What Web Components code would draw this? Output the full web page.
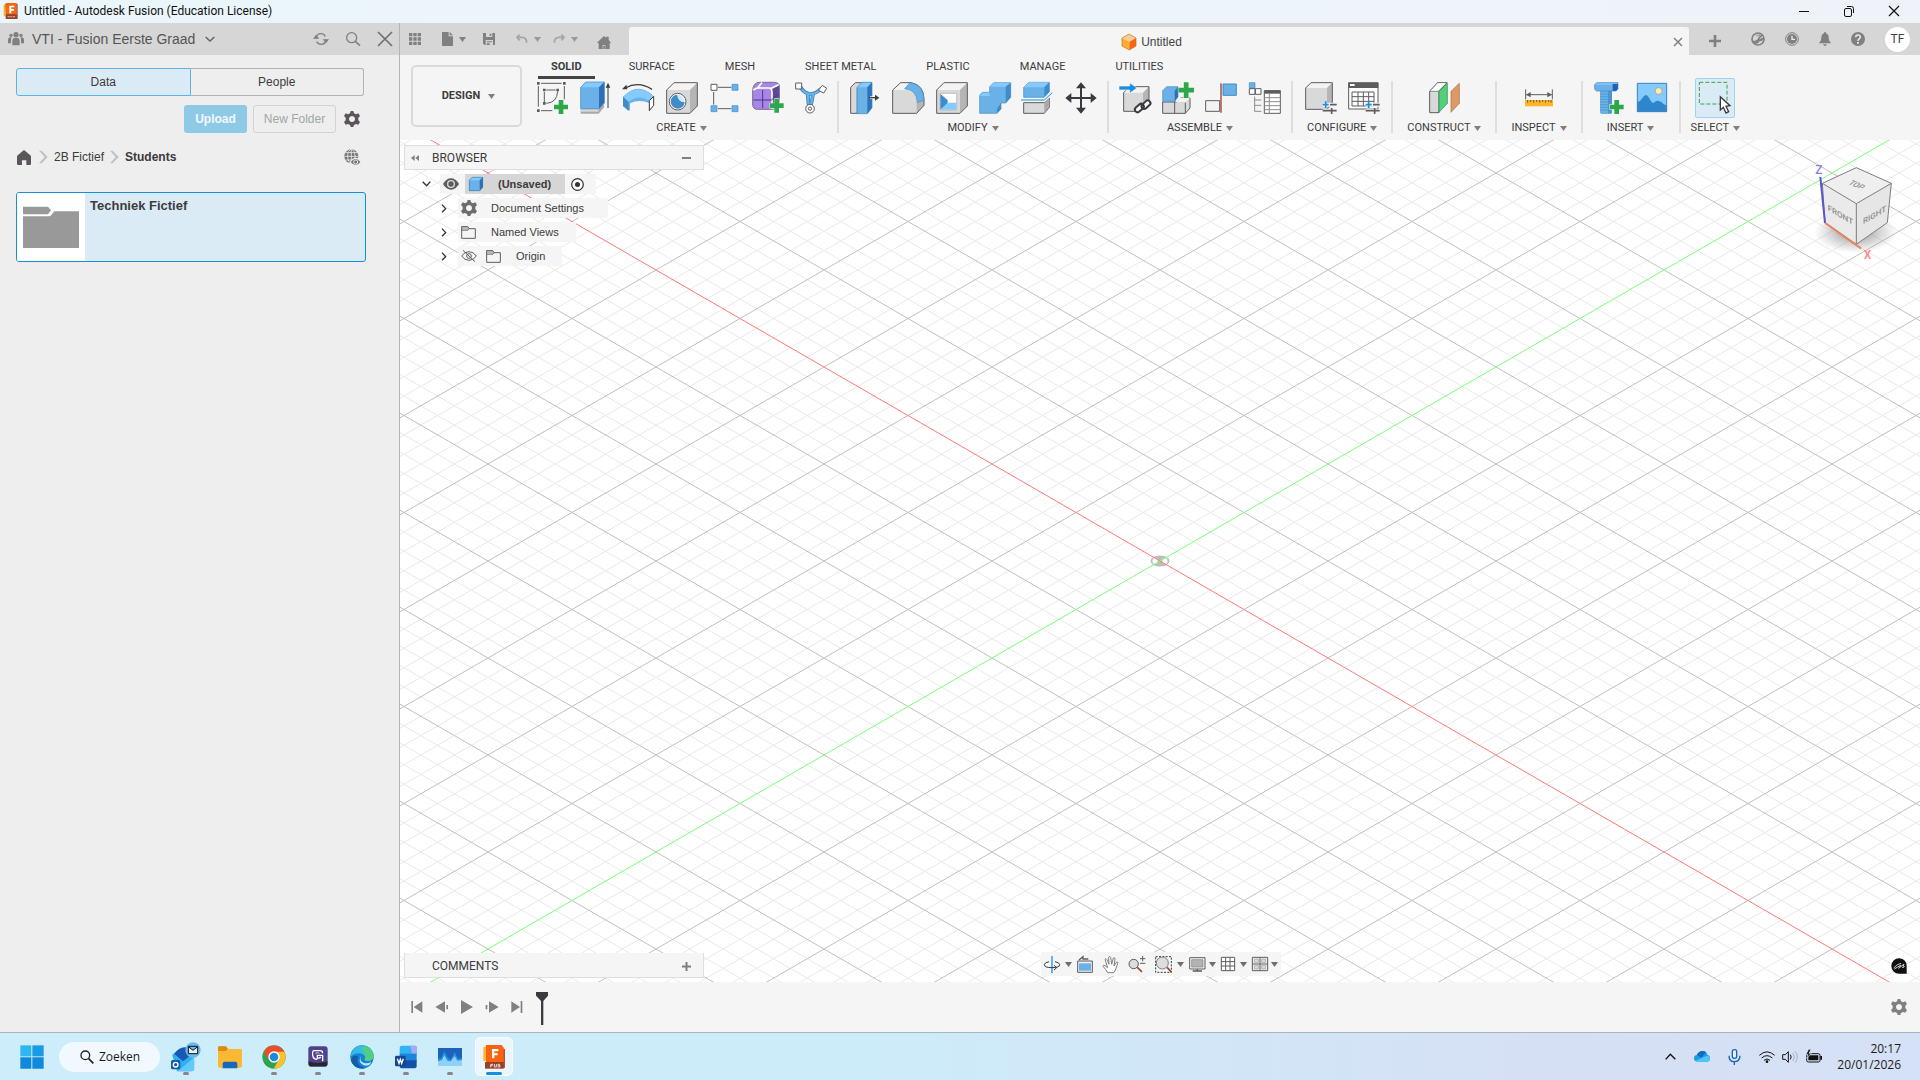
<!DOCTYPE html>
<html lang="nl">
<head>
<meta charset="utf-8">
<title>Untitled - Autodesk Fusion (Education License)</title>
<style>
html, body { height: 100%; margin: 0; }
body { font-family: "Liberation Sans", Arial, sans-serif; font-size: 12px; color: #3c3c3c; overflow: hidden; }
</style>
</head>
<body>
<fusion-desktop></fusion-desktop>
<script>
/* ---------- icon library: [width, height, viewBox, markup] ---------- */
const G = '#808080', D = '#5f5b5f', B = '#6ab1e7', BL = '#84caff', BD = '#3f8cc9', K = '#3a3a3f', GR = '#2ba84a';
const gearPath = 'M20 0h8l2 7 6 3 7-3 5 8-5 5v8l5 5-5 8-7-2-6 3-2 6h-8l-2-6-6-3-7 2-5-8 5-5v-8l-5-5 5-8 7 3 6-3zM24 15a9 9 0 1 0 .01 0z';
const plus = (x, y, s = 42) => `<path d="M${x + s / 2 - 7} ${y}h14v${s / 2 - 7}h${s / 2 - 7}v14h-${s / 2 - 7}v${s / 2 - 7}h-14v-${s / 2 - 7}h-${s / 2 - 7}v-14h${s / 2 - 7}z" fill="${GR}" stroke="#f5f5f5" stroke-width="3" paint-order="stroke"/>`;
const grayBox = (x, y, w, h, d) => `<path d="M${x} ${y + d}l${d}-${d}h${w - d}v${h - d}l-${d} ${d}h-${w - d}z" fill="#d9d9d9"/><path d="M${x} ${y + d}l${d}-${d}h${w - d}l-${d} ${d}z" fill="#f3f3f3"/><path d="M${x + w - d} ${y + d}l${d}-${d}v${h - d}l-${d} ${d}z" fill="#b5b5b5"/><path d="M${x} ${y + d}l${d}-${d}h${w - d}v${h - d}l-${d} ${d}h-${w - d}z" fill="none" stroke="${D}" stroke-width="3"/>`;
const sliders = (x, y) => `<g stroke="#f5f5f5" stroke-width="12"><path d="M${x} ${y + 10}h40M${x} ${y + 28}h40"/></g><path d="M${x} ${y + 10}h18M${x + 9} ${y}v20" stroke="#1a8fdc" stroke-width="5"/><path d="M${x + 22} ${y + 10}h20M${x} ${y + 28}h42M${x + 27} ${y + 20}v18" stroke="${D}" stroke-width="5"/>`;

const ICONS = {
  fusion: [16, 16, '0 0 48 48', '<path d="M6 3h34v43H10z" fill="#94452b"/><path d="M2 6l6-4v38H2z" fill="#f4b22f"/><path d="M8 0h32v34H8z" fill="#f9650f"/><path d="M8 34h32l4 3v11H8z" fill="#94452b"/><path d="M40 0l4 4v34l-4-4z" fill="#b34f25"/><path d="M19 8h15v5h-9v5h8v5h-8v8h-6z" fill="#fff"/><path d="M14 41h22" stroke="#d9a48f" stroke-width="4" stroke-dasharray="6 2"/>'],
  fusionBig: [22, 24, '0 0 66 72', '<path d="M60 10l6 3v55l-6 2z" fill="#b8542d"/><path d="M1 6l8-2v44H1z" fill="#fdb92c"/><path d="M9 0h47l6 8v43H9z" fill="#fa6410"/><path d="M6 51h56v20H6z" fill="#94432a"/><path d="M27 12h19v7H34v6h10v6H34v9h-7z" fill="#fff"/><g fill="none" stroke="#f1d5c8" stroke-width="3"><path d="M23 67v-9h7M23 62h6M34 57v9h6v-9M51 58h-6v4h6v4h-7"/></g>'],
  winMin: [12, 12, '0 0 12 12', '<path d="M1 6.500h10" stroke="#111"/>'],
  winMax: [12, 12, '0 0 12 12', '<g fill="none" stroke="#111"><rect x="1.5" y="3.5" width="7" height="8" rx="1.5"/><path d="M4 1.5h4.500a2 2 0 0 1 2 2V8"/></g>'],
  winClose: [12, 12, '0 0 12 12', '<path d="M1 1l10 10M11 1L1 11" stroke="#111" stroke-width="1.200"/>'],
  people: [16, 14, '0 0 48 42', `<g fill="${G}"><circle cx="24" cy="8" r="8"/><circle cx="9" cy="10" r="5"/><circle cx="39" cy="10" r="5"/><path d="M13 40V26q0-9 11-9t11 9v14z"/><path d="M0 34V23q0-6 6-7h5q-2 4-2 8v10zM48 34V23q0-6-6-7h-5q2 4 2 8v10z"/></g>`],
  chevDown: [10, 6, '0 0 30 18', '<path d="M2 3l13 12L28 3" fill="none" stroke="#606060" stroke-width="4"/>'],
  refresh: [16, 14, '0 0 48 42', `<g fill="none" stroke="${G}" stroke-width="4"><path d="M9 20Q10 5 24 5q9 0 13 8M39 22Q38 37 24 37q-9 0-13-8"/></g><path d="M29 22h19l-9 12zM0 20h19L9 8z" fill="${G}"/>`],
  search: [16, 16, '0 0 48 48', `<g fill="none" stroke="${G}" stroke-width="4"><circle cx="20" cy="20" r="15"/><path d="M31 31l14 13" stroke-width="5"/></g>`],
  close: [16, 16, '0 0 48 48', '<path d="M3 3l42 42M45 3L3 45" stroke="#6f6f6f" stroke-width="5"/>'],
  closeSm: [10, 10, '0 0 10 10', `<path d="M1 1l8 8M9 1L1 9" stroke="${G}" stroke-width="1.500"/>`],
  gear: [16, 16, '0 0 48 48', `<path d="${gearPath}" fill="currentColor" fill-rule="evenodd"/>`],
  homeDark: [14, 15, '0 0 42 45', '<path d="M21 0l19 16q2 2 2 4v22q0 3-3 3H28V31H15v14H3q-3 0-3-3V20q0-2 2-4z" fill="#5b565c"/>'],
  crumb: [9, 14, '0 0 27 42', '<path d="M0 2h8l18 19L8 40H0l17-19z" fill="#c1c1c1"/>'],
  globe: [17, 17, '0 0 51 51', `<circle cx="22" cy="22" r="21" fill="#737373"/><g fill="none" stroke="#eee" stroke-width="2.500"><path d="M22 1v42M1 22h42M5 11h34M5 33h34"/><ellipse cx="22" cy="22" rx="11" ry="21"/></g><path d="M17 39q8-13 18-13t16 13q-6 13-16 13t-18-13z" fill="#eee"/><path d="M20 39q7-9 15-9t14 9q-6 9-14 9t-15-9z" fill="#737373"/><circle cx="35" cy="39" r="6" fill="none" stroke="#eee" stroke-width="3"/>`],
  folderBig: [56, 42, '0 0 168 126', '<path d="M2 2h73l9 11-9 12H0V2zM0 31h77q5 0 8-4l9-11h74v110H0z" fill="#999"/>'],
  apps: [12, 12, '0 0 36 36', `<path d="M0 0h10v10H0zM13 0h10v10H13zM26 0h10v10H26zM0 13h10v10H0zM13 13h10v10H13zM26 13h10v10H26zM0 26h10v10H0zM13 26h10v10H13zM26 26h10v10H26z" fill="${G}"/>`],
  doc: [11, 14, '0 0 33 42', `<path d="M0 0h20v13h13v29H0zM23 0l10 10H23z" fill="${G}"/>`],
  save: [12, 12, '0 0 36 36', `<path d="M0 0h36v36H5L0 31z" fill="${G}"/><path d="M9 0h19v12H9zM8 21h22v15H8z" fill="#d6d6d6"/><path d="M20 2h5v7h-5zM11 25h16v3H11zM11 31h9v5h-9z" fill="${G}"/>`],
  undo: [12, 10, '0 0 36 30', '<path d="M11 2L3 10l8 9M4 10h14q14 0 14 16" fill="none" stroke="#a5a5a5" stroke-width="5"/>'],
  redo: [12, 10, '0 0 36 30', '<path d="M25 2l8 8-8 9M32 10H18Q4 10 4 26" fill="none" stroke="#a5a5a5" stroke-width="5"/>'],
  home: [14, 13, '0 0 42 39', `<path d="M21 0l6 5V2h8v10l7 8-4 2v17H25V27h-8v12H5V22l-5-2z" fill="${G}"/><path d="M19 29h5v10h-5z" fill="${G}"/>`],
  caret: [7, 5, '0 0 7 5', '<path d="M0 0h7L3.500 5z" fill="currentColor"/>'],
  untitled: [14, 16, '0 0 42 48', '<path d="M0 12L21 0l21 12-20 11z" fill="#f6cd93"/><path d="M0 12l22 11v25L0 36z" fill="#fbae2f"/><path d="M42 12L22 23v25l20-12z" fill="#f9660d"/><path d="M0 12L21 0l21 12v24L22 48 0 36z" fill="none" stroke="#c96a1f" stroke-width="2"/>'],
  plusGray: [12, 12, '0 0 36 36', `<path d="M14 0h8v14h14v8H22v14h-8V22H0v-8h14z" fill="${G}"/>`],
  plusSm: [9, 9, '0 0 9 9', `<path d="M3.500 0h2v3.500H9v2H5.500V9h-2V5.500H0v-2h3.500z" fill="${G}"/>`],
  minusSm: [9, 2, '0 0 9 2', `<path d="M0 0h9v2H0z" fill="${G}"/>`],
  ext: [14, 14, '0 0 42 42', `<circle cx="21" cy="21" r="18" fill="none" stroke="${G}" stroke-width="5"/><path d="M6 26q14 2 16-10l-7-6 9-4 5 5 3-4 4 6-7 6 9-2q-2 12-12 10Q24 36 9 36z" fill="${G}"/><path d="M22 6l-2 10 6-4M36 14l-10 6" stroke="#d6d6d6" stroke-width="3" fill="none"/>`],
  clock: [14, 14, '0 0 42 42', `<circle cx="21" cy="21" r="19" fill="none" stroke="${G}" stroke-width="3"/><circle cx="21" cy="21" r="15" fill="${G}"/><path d="M21 11v11h9" fill="none" stroke="#eee" stroke-width="4"/>`],
  bell: [12, 14, '0 0 36 42', `<path d="M18 0q3 0 3 4 8 3 8 13 0 9 7 15v2H0v-2q7-6 7-15Q7 7 15 4q0-4 3-4zM12 37h12q-2 5-6 5t-6-5z" fill="${G}"/>`],
  help: [14, 14, '0 0 42 42', `<circle cx="21" cy="21" r="21" fill="${G}"/><path d="M14 16q0-7 7-7t7 6q0 4-4 6-3 2-3 6" fill="none" stroke="#e4e4e4" stroke-width="5"/><path d="M18 30h6v5h-6z" fill="#e4e4e4"/>`],

  sketch: [32, 32, '0 0 96 96', `<g fill="none" stroke="${D}" stroke-width="3"><path d="M12 4h62M4 12v62M82 12v40M12 86h34M22 30v30M28 24h28M62 28q-2 34-34 36"/></g><path d="M0 0h8v8H0zM78 0h8v8h-8zM0 82h8v8H0zM18 20h8v8h-8zM58 20h8v8h-8zM18 60h8v8h-8z" fill="${D}"/>${plus(51, 54)}`],
  extrude: [32, 32, '0 0 96 96', `<path d="M2 82h54l16-16v10L56 95H2z" fill="#a9a9a9" /><path d="M2 86h54" stroke="#d9d9d9" stroke-width="6"/><path d="M2 16L17 0h56v63L57 80H2z" fill="${B}"/><path d="M2 16L17 0h56L57 16z" fill="${BL}"/><path d="M57 16L73 0v63L57 80z" fill="#2f6fb5"/><path d="M2 16L17 0h56v63L57 80H2z" fill="none" stroke="#3c83c0" stroke-width="2"/><path d="M84 78V10" stroke="${K}" stroke-width="3"/><path d="M84 2l7 15H77z" fill="${K}"/>`],
  revolve: [33, 32, '0 0 99 96', `<path d="M3 44q45-46 90-3v30L83 86V64q-30-14-59 0v22L3 72z" fill="${B}"/><path d="M3 44q45-44 90-2L80 56q-28-20-60 3z" fill="${BL}"/><path d="M3 44l17 16v27L3 72z" fill="${BD}"/><path d="M82 56l13-13v27L82 86z" fill="#fff" stroke="${K}" stroke-width="3"/><path d="M10 18Q50-4 90 22" fill="none" stroke="${K}" stroke-width="4"/><path d="M0 22L13 8l3 14z" fill="${K}"/>`],
  hole: [32, 32, '0 0 96 96', `${grayBox(2, 2, 92, 92, 22)}<circle cx="35" cy="59" r="25" fill="#fff" stroke="${D}" stroke-width="3"/><path d="M34 38a21 21 0 1 0 22 22q-20 0-22-22z" fill="${BD}"/><path d="M34 38a21 21 0 0 1 22 22q-20 0-22-22z" fill="#cfe8fb"/>`],
  pattern: [30, 32, '0 0 90 96', `<path d="M24 16h40M11 30v38M24 80h40" stroke="${D}" stroke-width="3"/><path d="M3 7h18v18H3z" fill="#fff" stroke="${D}" stroke-width="3"/><path d="M66 7h18v18H66zM3 71h18v18H3zM66 71h18v18H66z" fill="${B}" stroke="${BD}" stroke-width="2"/>`],
  form: [32, 32, '0 0 96 96', `<path d="M2 26Q3 2 22 1h46q16 1 14 16v44Q80 82 62 82H16Q2 82 2 66z" fill="#a985e8"/><path d="M58 24L82 8v54L58 82z" fill="#5f4797"/><path d="M2 26Q3 2 22 1h46q16 1 14 16v44Q80 82 62 82H16Q2 82 2 66z" fill="none" stroke="#7a6d8c" stroke-width="3"/><path d="M4 24Q14 16 28 18h24q8 2 8 14v48M54 20L80 8M18 16l12-14" fill="none" stroke="#fff" stroke-width="5"/><path d="M32 24v54M4 54h54l22-18" fill="none" stroke="#4a3a86" stroke-width="3"/>${plus(53, 50)}`],
  pipe: [32, 32, '0 0 96 96', `<path d="M16 14Q26 34 46 36q20-2 32-16M38 36q2 28 4 38M54 36q-4 28-8 38" fill="none" stroke="#3477b5" stroke-width="11"/><path d="M16 14Q26 34 46 36q20-2 32-16M38 36q2 28 4 38M54 36q-4 28-8 38" fill="none" stroke="${B}" stroke-width="7"/><g fill="#fff" stroke="${D}" stroke-width="3"><path d="M2 3h18v18H2zM82 10l13 9-9 14-16-8z"/><circle cx="45" cy="80" r="13"/><circle cx="45" cy="80" r="5"/></g>`],
  presspull: [32, 32, '0 0 96 96', `<path d="M2 16L16 2h24L22 20v74H2z" fill="#d9d9d9" stroke="${D}" stroke-width="3"/><path d="M21 16L36 1h30v76L52 95H21z" fill="${B}"/><path d="M21 16L36 1h30L52 16z" fill="${BL}"/><path d="M52 16L66 1v76L52 95z" fill="#2f74b9"/><path d="M21 16L36 1h30v76L52 95H21z" fill="none" stroke="#3c83c0" stroke-width="2"/><path d="M60 47h16" stroke="#fff" stroke-width="8"/><path d="M58 47h20" stroke="${K}" stroke-width="4"/><path d="M75 38l13 9-13 9z" fill="${K}"/>`],
  fillet: [33, 32, '0 0 99 96', `<path d="M2 24L26 2h32q38 8 38 50v18L74 94H2z" fill="#d9d9d9"/><path d="M2 24L26 2h34L40 24z" fill="#f3f3f3"/><path d="M74 62l22-12v20L74 94z" fill="#b5b5b5"/><path d="M2 24L26 2h32q38 8 38 50v18L74 94H2z" fill="none" stroke="${D}" stroke-width="3"/><path d="M38 20L54 2q42 6 42 52L76 62q-2-40-38-42z" fill="${B}" stroke="${BD}" stroke-width="2"/>`],
  shell: [32, 32, '0 0 96 96', `${grayBox(2, 2, 92, 92, 22)}<path d="M12 34h50v50H12z" fill="#fff" stroke="#aaa" stroke-width="2"/><path d="M13 35l22 20v10L13 83z" fill="${BD}"/><path d="M35 62h26v21H13z" fill="${BL}"/>`],
  combine: [32, 32, '0 0 96 96', `<path d="M2 40l8-9h22V14L44 2h51v44L80 63H66v18L54 94H2z" fill="${B}" stroke="${BD}" stroke-width="2"/><path d="M32 14L44 2h51L80 14zM2 42l8-10h22v10z" fill="${BL}"/><path d="M80 14L95 2v44L80 63zM54 80l12-17v18L54 94z" fill="${BD}"/>`],
  offset: [33, 32, '0 0 99 96', `<path d="M8 62h62l15-14v28L70 94H8z" fill="#d9d9d9" stroke="${D}" stroke-width="3"/><path d="M70 62l15-14v28L70 92z" fill="#aaa"/><path d="M8 16L24 1h61v28L70 46H8z" fill="${B}" stroke="${BD}" stroke-width="2"/><path d="M8 16L24 1h61L70 16z" fill="${BL}"/><path d="M70 16L85 1v28L70 46z" fill="${BD}"/><path d="M2 54h68l24-22" fill="none" stroke="#f5f5f5" stroke-width="10"/><path d="M0 54h70l24-22" fill="none" stroke="#1a8fdc" stroke-width="3"/>`],
  move: [32, 32, '0 0 96 96', `<path d="M48 14v68M14 48h68" stroke="${K}" stroke-width="6"/><path d="M48 1l15 18H33zM48 95l15-18H33zM1 48l18-15v30zM95 48L77 33v30z" fill="${K}"/>`],
  insertLink: [33, 32, '0 0 99 96', `${grayBox(14, 14, 76, 74, 18)}<path d="M0 12h32V2l22 16-22 16V24H0z" fill="#1a8fdc" stroke="#f5f5f5" stroke-width="2"/><path d="M60 84l28-18" fill="none" stroke="#f5f5f5" stroke-width="26" stroke-linecap="round"/><g fill="none" stroke="${K}" stroke-width="6"><rect x="46" y="70" width="30" height="16" rx="8" transform="rotate(-42 61 78)"/><rect x="66" y="60" width="30" height="16" rx="8" transform="rotate(-42 81 68)"/></g>`],
  newComp: [33, 32, '0 0 99 96', `<path d="M2 60h42l12-12h28v30L70 94H2z" fill="#d9d9d9" stroke="${D}" stroke-width="3"/><path d="M40 60l12-12h32L70 60z" fill="#f3f3f3"/><path d="M38 58v36M70 62v32" stroke="${D}" stroke-width="3"/><path d="M2 26l12-12h34v30L38 58H2z" fill="${B}" stroke="${BD}" stroke-width="2"/><path d="M38 26l10-12v30L38 58z" fill="#2f6fb5"/>${plus(49, 1, 47)}`],
  joint: [33, 32, '0 0 99 96', `<path d="M2 56h42v32H2z" fill="#f3f3f3" stroke="${D}" stroke-width="3"/><path d="M54 6h40v34H54z" fill="${B}" stroke="${BD}" stroke-width="3"/><path d="M48 4v88" stroke="#94452b" stroke-width="4"/>`],
  bom: [33, 32, '0 0 99 96', `<path d="M4 2h17v17H4z" fill="${B}" stroke="${BD}" stroke-width="2"/><path d="M4 20h17v17H4zM22 20h17v17H22z" fill="#fff" stroke="${D}" stroke-width="3"/><path d="M20 44v44M20 54h20M20 70h20M20 88h20" stroke="#8c8c8c" stroke-width="3"/><path d="M49 26h48v68H49z" fill="#fff" stroke="${D}" stroke-width="3"/><path d="M49 25h48v10H49z" fill="${D}"/><path d="M49 47h48M49 59h48M49 71h48M49 83h48M64 34v60" stroke="#8c8c8c" stroke-width="3"/>`],
  configure: [32, 32, '0 0 96 96', `${grayBox(2, 2, 80, 80, 16)}${sliders(53, 58)}`],
  configTable: [32, 32, '0 0 96 96', `<path d="M2 3h88v78H2z" fill="#fff" stroke="${D}" stroke-width="3"/><path d="M1 1h90v17H1z" fill="${D}"/><path d="M6 6h14v6H6z" fill="#fff"/><path d="M12 30h66v42H12zM12 44h66M12 58h66M30 30v42M46 30v42M62 30v42" fill="none" stroke="${D}" stroke-width="3"/>${sliders(53, 58)}`],
  construct: [31, 32, '0 0 93 96', `<path d="M2 28L26 2h28L30 28v64H2z" fill="#d9d9d9" stroke="${D}" stroke-width="3"/><path d="M2 28L26 2h28L28 28z" fill="#fff" stroke="${D}" stroke-width="2"/><path d="M30 28L55 4v60L30 91z" fill="#54cf7c" stroke="#238a42" stroke-width="2"/><path d="M66 28L91 4v60L66 91z" fill="#dc9a66" stroke="#a96d3e" stroke-width="2"/>`],
  inspect: [28, 32, '0 0 84 96', `<path d="M2 22v30M82 22v30M4 38h76" stroke="${D}" stroke-width="3"/><path d="M3 38l14-8v16zM81 38l-14-8v16z" fill="${D}"/><path d="M0 54h84v19H0z" fill="#fdb52b"/><path d="M8 54v8M17 54v6M26 54v8M35 54v6M44 54v8M53 54v6M62 54v8M71 54v6M78 54v8" stroke="#7d5a17" stroke-width="3"/>`],
  bolt: [31, 32, '0 0 93 96', `<path d="M18 26h36v66l-4 4H22l-4-4z" fill="${B}"/><path d="M42 26h12v68H42z" fill="#4e96d3"/><path d="M18 36h36M18 44h36M18 52h36M18 60h36M18 68h36M18 76h36M18 84h36" stroke="#4c8fca" stroke-width="2"/><path d="M2 8l6-6h64v18l-6 7H8l-6-5z" fill="${B}"/><path d="M2 8l6-6h64l-6 6z" fill="${BL}"/><path d="M56 6h16v14l-6 7H56z" fill="#2360ae"/><path d="M2 8l6-6h64v18l-6 7H8l-6-5z" fill="none" stroke="#3c83c0" stroke-width="2"/>${plus(47, 54)}`],
  image: [30, 32, '0 0 90 96', `<path d="M1 4h88v85H1z" fill="${BL}"/><path d="M1 60q10-2 16-13 10-17 20 2 9 20 17 10 10-6 20 2 7 8 15 10v18H1z" fill="#2f86cc"/><circle cx="65" cy="27" r="10" fill="#ffeebb" stroke="#b79a55" stroke-width="2"/><path d="M1 4h88v85H1z" fill="none" stroke="#3783c3" stroke-width="3"/>`],
  select: [40, 40, '0 0 120 120', `<path d="M13 13h83v65H13z" fill="none" stroke="${GR}" stroke-width="3" stroke-dasharray="12 6"/><path d="M76 56v40l9-8 8 17 8-4-8-16 12-2z" fill="#fff" stroke="${K}" stroke-width="4"/>`],

  dbl: [8, 6, '0 0 24 18', `<path d="M11 0v18L0 9zM24 0v18L13 9z" fill="${G}"/>`],
  treeDown: [9, 6, '0 0 27 18', '<path d="M2 2l12 12L25 2" fill="none" stroke="#333" stroke-width="4"/>'],
  treeRight: [6, 9, '0 0 18 27', '<path d="M3 2l11 12L3 25" fill="none" stroke="#333" stroke-width="4"/>'],
  eye: [16, 12, '0 0 48 36', `<path d="M0 18Q10 1 24 1t24 17Q38 35 24 35T0 18z" fill="${D}"/><circle cx="24" cy="18" r="10" fill="none" stroke="#ddd" stroke-width="4"/>`],
  eyeOff: [16, 12, '0 0 48 36', `<g fill="none" stroke="${D}" stroke-width="3"><path d="M2 18Q11 5 24 5t22 13Q37 31 24 31T2 18z"/><circle cx="24" cy="18" r="7"/><path d="M6 1l36 34"/></g>`],
  cube: [14, 14, '0 0 42 42', `<path d="M0 10L10 0h32v30L32 42H0z" fill="${B}"/><path d="M0 10L10 0h32L32 10z" fill="${BL}"/><path d="M32 10L42 0v30L32 42z" fill="#2f6fb5"/><path d="M1 10L10 1h31v29l-9 11H1z" fill="none" stroke="#3d7fb9" stroke-width="2"/>`],
  radio: [13, 13, '0 0 13 13', '<circle cx="6.500" cy="6.500" r="5.800" fill="#fff" stroke="#333" stroke-width="1.200"/><circle cx="6.500" cy="6.500" r="2.500" fill="#333"/>'],
  folder: [15, 13, '0 0 45 39', `<path d="M2 8V2h18l4 6h19v29H2z" fill="#f5f5f5" stroke="${D}" stroke-width="3"/><path d="M2 2h18l4 6-3 5H2z" fill="#bbb" stroke="${D}" stroke-width="2"/>`],

  orbit: [16, 17, '0 0 48 51', `<path d="M24 0v51" stroke="#63b4ea" stroke-width="6"/><path d="M15 17q-14 3-14 9 0 9 23 9t23-9q0-6-14-9" fill="none" stroke="${K}" stroke-width="3"/><path d="M30 28l8 7-8 7" stroke="${K}" stroke-width="3" fill="none"/>`],
  look: [16, 17, '0 0 48 51', `<path d="M2 15h44v34H2z" fill="#eee" stroke="${D}" stroke-width="3"/><path d="M6 22h36v22H6z" fill="${B}"/><path d="M6 12L18 2v7h16" fill="none" stroke="${D}" stroke-width="4"/>`],
  pan: [17, 17, '0 0 51 51', `<path d="M17 50Q12 40 3 31q0-5 6-2l8 6L9 10q3-5 6 1l6 14-1-22q4-4 6 1l3 21 5-19q5-2 5 3l-3 21 8-12q5-1 3 5l-7 19-5 8z" fill="#fff" stroke="${G}" stroke-width="3"/>`],
  zoomPM: [18, 17, '0 0 54 51', `<circle cx="17" cy="24" r="14" fill="#ddd" stroke="${D}" stroke-width="3"/><path d="M28 34l14 14" stroke="#94452b" stroke-width="5"/><path d="M36 8h16M44 0v16M36 22h16" stroke="${D}" stroke-width="3"/>`],
  fit: [17, 17, '0 0 51 51', `<path d="M2 2h47v47H2z" fill="none" stroke="${K}" stroke-width="3" stroke-dasharray="6 4"/><circle cx="22" cy="21" r="18" fill="#ddd" stroke="${G}" stroke-width="3"/><path d="M36 34l13 14" stroke="#94452b" stroke-width="5"/>`],
  display: [17, 15, '0 0 51 45', `<path d="M2 2h46v34H2z" fill="#f5f5f5" stroke="${D}" stroke-width="3"/><path d="M8 8h34v22H8z" fill="#b3b3b3" stroke="${G}" stroke-width="2"/><path d="M11 42h28M25 36v6" stroke="${D}" stroke-width="4"/>`],
  grid: [14, 14, '0 0 42 42', `<path d="M1 1h40v40H1zM14 1v40M27 1v40M1 14h40M1 27h40" fill="#fff" stroke="${D}" stroke-width="3"/>`],
  views: [16, 14, '0 0 48 42', `<path d="M1 1h46v40H1zM24 1v40M1 21h46" fill="#f5f5f5" stroke="${D}" stroke-width="3"/><path d="M7 6h12v10H7zM29 6h12v10H29zM7 26h12v10H7zM29 26h12v10H29z" fill="#ddd" stroke="#999" stroke-width="2"/>`],
  tStart: [12, 12, '0 0 36 36', `<path d="M1 0h5v36H1zM34 1v34L8 18z" fill="${G}"/>`],
  tPrev: [14, 12, '0 0 42 36', `<path d="M30 1v34L1 18zM34 12h5v13h-5z" fill="${G}"/>`],
  tPlay: [12, 14, '0 0 36 42', `<path d="M0 0l36 21L0 42z" fill="${G}"/>`],
  tNext: [14, 12, '0 0 42 36', `<path d="M12 1v34l29-17zM2 12h5v13H2z" fill="${G}"/>`],
  tEnd: [12, 12, '0 0 36 36', `<path d="M29 0h5v36h-5zM1 1v34l26-17z" fill="${G}"/>`],
  marker: [12, 33, '0 0 36 99', `<path d="M0 0h36v11L22 27v72h-7V27L0 11z" fill="${K}"/>`],
  assist: [16, 16, '0 0 48 48', '<path d="M24 1h2a22 22 0 0 1 21 22v24H24A23 23 0 0 1 24 1z" fill="#111"/><path d="M8 30q10-12 22-14M10 33l20-12-7 10 16-13-4 12 6-6" fill="none" stroke="#ccc" stroke-width="3"/>'],

  win: [24, 24, '0 0 72 72', '<path d="M1 1h33v33H1z" fill="#2eb6f0"/><path d="M37 1h34v33H37z" fill="#1a9be4"/><path d="M1 37h33v34H1zM37 37h34v34H37z" fill="#1089db"/>'],
  searchDark: [14, 14, '0 0 42 42', '<circle cx="16" cy="16" r="13" fill="none" stroke="#222" stroke-width="4"/><path d="M26 26l14 14" stroke="#222" stroke-width="5"/>'],
  outlook: [30, 30, '0 0 90 90', '<path d="M4 40Q6 32 30 20l38 18v44q0 6-8 6H18z" fill="#30aef0"/><path d="M10 36Q24 14 44 16l24 16-32 26z" fill="#1b58b4"/><path d="M20 88l50-42v36q0 6-8 6H22z" fill="#65c9f7"/><rect x="0" y="54" width="28" height="28" rx="5" fill="#115ea8"/><circle cx="14" cy="68" r="7" fill="none" stroke="#fff" stroke-width="4"/><circle cx="66" cy="24" r="23" fill="#68b9ee"/><path d="M52 13h28v22H52zM52 14l14 11 14-11" fill="#dff1fb" stroke="#111" stroke-width="3"/>'],
  explorer: [24, 24, '0 0 72 72', '<path d="M0 8q0-4 4-4h20l7 8h37q4 0 4 4v46q0 6-6 6H6q-6 0-6-6z" fill="#fbb933"/><path d="M0 8q0-4 4-4h20l5 7-5 7H0z" fill="#dd8c12"/><path d="M14 70V56q0-6 6-6h32q6 0 6 6v14z" fill="#1668bd"/>'],
  chrome: [24, 24, '0 0 72 72', '<circle cx="36" cy="36" r="35" fill="#2aa44f"/><path d="M36 36L5 20A35 35 0 0 1 67 20z" fill="#ea4d2b"/><path d="M36 20h31a35 35 0 0 1-32 51l16-28z" fill="#fcc02c"/><path d="M5 20l16 26 10-28z" fill="#ea4d2b"/><circle cx="36" cy="36" r="17" fill="#fff"/><circle cx="36" cy="36" r="13" fill="#1b8ae5"/>'],
  gapp: [20, 21, '0 0 60 63', '<rect x="1" y="1" width="58" height="61" rx="9" fill="#50418c"/><path d="M2 46q28 10 56 0v7q0 8-8 8H10q-8 0-8-8z" fill="#28282c"/><path d="M16 14h20q8 0 8 8M16 14q-4 4-2 14 2 12 14 12M44 46V28H28v8q8 2 10-4" fill="none" stroke="#fff" stroke-width="4"/><path d="M22 22q6-4 12 0" fill="none" stroke="#d8cff5" stroke-width="3"/>'],
  edge: [24, 24, '0 0 72 72', '<circle cx="36" cy="36" r="35" fill="#1781d4"/><path d="M3 28Q12 1 38 1q31 2 33 33-2 15-20 14-8-1-7-7 4-8-6-13Q20 19 3 34z" fill="#36bbe8"/><path d="M45 2q25 6 26 32-2 15-20 14-8-1-7-7 6-18-10-28z" fill="#52ce80"/><path d="M24 34q-9 27 20 36Q15 75 3 48q3-21 21-14z" fill="#135da9"/><path d="M36 30q-12 18 6 24 12 3 22-4-6 16-24 10-20-10-4-30z" fill="#bfe8fb"/>'],
  word: [22, 24, '0 0 66 72', '<path d="M14 8q0-6 6-6h40q5 0 5 5v22H14z" fill="#30b5f2"/><path d="M46 2h14q5 0 5 5v22L50 24z" fill="#a8a9f1"/><path d="M14 26h51v24H14z" fill="#1c86dc"/><path d="M14 46h51v18q0 6-6 6H20q-6 0-6-6z" fill="#164fa6"/><rect x="0" y="32" width="32" height="32" rx="4" fill="#174596"/><path d="M7 41l5 14 4-12 4 12 5-14" fill="none" stroke="#fff" stroke-width="4"/>'],
  wave: [24, 18, '0 0 72 54', '<path d="M0 0h72v54H0z" fill="#1b62b8"/><path d="M0 32l10-2 8-20 12 20 8 6 12-24 10 20 12-2v24H0z" fill="#2094df"/><path d="M0 40l12-4 7-14 9 16 10 2 12-16 8 14 14-2v18H0z" fill="#90cff7"/>'],
  trayUp: [11, 7, '0 0 33 21', '<path d="M2 19L16 4l15 15" fill="none" stroke="#111" stroke-width="4"/>'],
  cloud: [16, 11, '0 0 48 33', '<path d="M11 32Q0 32 0 22t10-10Q14 0 26 0q11 0 14 11 8 2 8 11t-9 10z" fill="#199be8"/><path d="M4 30l34-16q10 0 10 9 0 9-9 9H11z" fill="#52c4f8"/><path d="M8 12Q14 0 26 0q6 0 10 4L22 20z" fill="#146cc0"/>'],
  mic: [13, 16, '0 0 39 48', '<rect x="13" y="2" width="13" height="26" rx="6" fill="#eaf2ff" stroke="#1666b9" stroke-width="4"/><path d="M3 20q0 18 16 18t17-18M19 38v10" fill="none" stroke="#1666b9" stroke-width="4"/>'],
  wifi: [16, 12, '0 0 48 36', '<g fill="none" stroke="#111" stroke-width="3"><path d="M1 13Q24-8 47 13M8 21q16-14 32 0M15 28q9-8 18 0"/></g><circle cx="24" cy="32" r="4" fill="#111"/>'],
  sound: [17, 12, '0 0 51 36', '<path d="M2 11h8L19 2v32l-9-9H2z" fill="none" stroke="#111" stroke-width="3"/><path d="M25 11q5 7 0 14" fill="none" stroke="#111" stroke-width="3"/><path d="M32 6q9 12 0 24M39 1q14 17 0 34" fill="none" stroke="#a7b0bf" stroke-width="3"/>'],
  battery: [16, 13, '0 0 48 39', '<rect x="2" y="11" width="40" height="25" rx="5" fill="none" stroke="#111" stroke-width="3"/><path d="M7 16h30v15H7zM43 18h5v11h-5z" fill="#111"/><path d="M8-2L0 13h6l-4 12 14-15H9l6-12z" fill="#111" stroke="#d7e2f5" stroke-width="2"/>']
};

function define(name, css, html, after) {
  const t = document.createElement('template');
  t.innerHTML = `<style>:host{display:block;box-sizing:border-box}*{box-sizing:border-box}button{font:inherit;color:inherit;background:none;border:0;padding:0;margin:0;display:flex;align-items:center;justify-content:center}a{color:inherit;text-decoration:none}${css}</style>${html}`;
  customElements.define(name, class extends HTMLElement {
    constructor() {
      super();
      this.attachShadow({ mode: 'open' }).append(t.content.cloneNode(true));
    }
    connectedCallback() {
      if (this.ready) return;
      this.ready = true;
      if (after) after(this.shadowRoot, this);
    }
  });
}
const ic = n => `<fx-icon name="${n}"></fx-icon>`;
const btn = (n, label, cls = '') => `<button class="${cls}" aria-label="${label}">${ic(n)}</button>`;

define('fx-icon', ':host{display:block;flex:none}svg{display:block;overflow:visible}', '', (root, el) => {
  const [w, h, vb, body] = ICONS[el.getAttribute('name')];
  root.innerHTML += `<svg width="${w}" height="${h}" viewBox="${vb}" aria-hidden="true">${body}</svg>`;
});

define('title-bar', `
:host{display:flex;align-items:center;height:23px;padding:0 20px 2px 3px;gap:5px;background:linear-gradient(90deg,#eaf6fb,#eff3f9);font:12px/16px Roboto,"Segoe UI",sans-serif;color:#111}
.sp{flex:1}.win{display:flex;gap:33px}`,
`${ic('fusion')}<span>Untitled - Autodesk Fusion (Education License)</span><span class="sp"></span>
<div class="win">${btn('winMin', 'Minimaliseren')}${btn('winMax', 'Vorig formaat')}${btn('winClose', 'Sluiten')}</div>`);

define('data-panel', `
:host{display:flex;flex-direction:column;background:#eeeeee;border-right:1px solid #b4b4b4}
header{display:flex;align-items:center;height:32px;flex:none;background:#d6d6d6;padding:0 6px 0 8px;font-size:14px;color:#555}
header .team{gap:8px}header .team fx-icon:last-child{margin-left:2px}
header .acts{display:flex;gap:16px;margin-left:auto}
.body{padding:13px 35px 0 16px;display:flex;flex-direction:column}
.tabs{display:flex;height:28px}
.tabs button{flex:1;border:1px solid #b3b3b3;border-radius:0 3px 3px 0;border-left:0}
.tabs button.on{background:#dbebf5;border:1px solid #5fb2e6;border-radius:3px 0 0 3px}
.acts2{display:flex;align-items:center;justify-content:flex-end;gap:6px;margin-top:9px;height:28px;padding-right:4px}
.up{width:63px;height:28px;background:#8ecae6;border-radius:3px;color:#f2f8fb;font-weight:bold}
.nf{width:83px;height:28px;border:1px solid #d2d2d2;border-radius:3px;color:#a0a7a5}
.acts2 .gear{color:#5b565c;margin-left:2px}
nav{display:flex;align-items:center;gap:6px;margin-top:16px;height:16px}
nav fx-icon{flex:none}nav b{color:#3a3a3a}nav button{margin-left:auto;padding-right:3px}
nav .h{padding:0 2px 0 1px}
.card{display:flex;height:70px;margin:27px -2px 0 0;border:1px solid #1490da;border-radius:3px;background:#dbebf5;overflow:hidden}
.th{width:68px;background:#fff;display:flex;align-items:center;justify-content:center}
.nm{font-size:13px;line-height:16px;font-weight:bold;padding:5px}`,
`<header><button class="team">${ic('people')}<span>VTI - Fusion Eerste Graad</span>${ic('chevDown')}</button>
<div class="acts">${btn('refresh', 'Refresh')}${btn('search', 'Search')}${btn('close', 'Close')}</div></header>
<div class="body">
<div class="tabs"><button class="on">Data</button><button>People</button></div>
<div class="acts2"><button class="up">Upload</button><button class="nf">New Folder</button>${btn('gear', 'Settings', 'gear')}</div>
<nav><a class="h" href="#" aria-label="Home">${ic('homeDark')}</a>${ic('crumb')}<a href="#">2B Fictief</a>${ic('crumb')}<b>Students</b>${btn('globe', 'Open on the web')}</nav>
<div class="card"><div class="th">${ic('folderBig')}</div><div class="nm">Techniek Fictief</div></div>
</div>`);

define('quick-bar', `
:host{display:flex;height:32px;background:#d6d6d6;align-items:stretch;padding-left:9px}
.q{display:flex;align-items:center;width:220px;color:#808080;flex:none}
.q .g{display:flex;align-items:center;gap:6px}
.q .dim{color:#999}
.g1{margin-left:21px}.g2{margin-left:17px}.g3{margin-left:21px}.g4{margin-left:12px}.hm{margin:7px 0 0 19px}
.tab{flex:1;display:flex;align-items:center;justify-content:center;gap:5px;background:#f5f5f5;margin-top:4px;border-radius:3px 3px 0 0;padding:1px 6px 0 0;color:#444}
.tab .x{margin-left:auto}.tab:before{content:"";margin-right:auto;width:2px}
.r{display:flex;align-items:center;justify-content:flex-end;gap:20px;width:231px;padding-right:10px;flex:none}
.r .p{margin:3px 10px 0 0}
.av{width:25px;height:25px;border-radius:50%;background:#fff;color:#444;font:12px/25px Roboto,sans-serif}`,
`<div class="q">${btn('apps', 'Apps')}<span class="g g1">${btn('doc', 'File')}${ic('caret')}</span><span class="g2">${btn('save', 'Save')}</span>
<span class="g g3 dim">${btn('undo', 'Undo')}${ic('caret')}</span><span class="g g4 dim">${btn('redo', 'Redo')}${ic('caret')}</span><span class="hm">${btn('home', 'Home')}</span></div>
<div class="tab">${ic('untitled')}<span>Untitled</span>${btn('closeSm', 'Close tab', 'x')}</div>
<div class="r">${btn('plusGray', 'New tab', 'p')}${btn('ext', 'Extensions')}${btn('clock', 'Job status')}${btn('bell', 'Notifications')}${btn('help', 'Help')}<button class="av">TF</button></div>`);

define('tool-group', `
:host{display:flex;flex-direction:column;align-items:center;border-right:2px solid #dedede;height:52px;padding:0 5px}
:host(:last-of-type){border-right:0;padding-left:1px}
.i{display:flex;justify-content:center;height:34px}
.i button{width:43px;height:34px}
.i button.sel{width:40px;height:40px;margin-top:-3px;background:#dbebf5;border:1px solid #9fd2ef;border-radius:2px}
.l{padding:0 9px;gap:4px;margin-top:6px;line-height:14px}
.l fx-icon{color:#808080}`, '', (root, el) => {
  const label = el.getAttribute('label');
  root.innerHTML += `<div class="i">${el.getAttribute('tools').split(' ').map(n => btn(n, n, n === 'select' ? 'sel' : '')).join('')}</div><button class="l">${label}${ic('caret')}</button>`;
});

define('ribbon-bar', `
:host{display:flex;height:85px;background:#f5f5f5;font:11px/14px Roboto,sans-serif;color:#3c3c3c;padding-left:11px}
.ws{width:111px;height:62px;margin-top:10px;border:2px solid #dadada;border-radius:5px;font-weight:bold;gap:8px;padding-left:4px;flex:none}
.ws fx-icon{color:#808080}
.m{margin-left:4px;display:flex;flex-direction:column}
.t{display:flex;gap:24px;height:24px;margin:0 0 2px 12px}
.t button{padding:2px 13px 0;border-bottom:3px solid transparent}
.t .on{font-weight:bold;border-color:#444}
.t button:nth-child(2){margin-left:-3px}
.g{display:flex}`,
`<button class="ws">DESIGN${ic('caret')}</button><div class="m">
<div class="t"><button class="on">SOLID</button><button>SURFACE</button><button>MESH</button><button>SHEET METAL</button><button>PLASTIC</button><button>MANAGE</button><button>UTILITIES</button></div>
<div class="g">
<tool-group label="CREATE" tools="sketch extrude revolve hole pattern form pipe"></tool-group>
<tool-group label="MODIFY" tools="presspull fillet shell combine offset move"></tool-group>
<tool-group label="ASSEMBLE" tools="insertLink newComp joint bom"></tool-group>
<tool-group label="CONFIGURE" tools="configure configTable"></tool-group>
<tool-group label="CONSTRUCT" tools="construct"></tool-group>
<tool-group label="INSPECT" tools="inspect"></tool-group>
<tool-group label="INSERT" tools="bolt image"></tool-group>
<tool-group label="SELECT" tools="select"></tool-group>
</div></div>`);

/* Ground plane: two families of parallel lines, every fifth one heavier, plus the X and Y axes. */
define('ground-grid', ':host{position:absolute;inset:0;background:#fff}svg{display:block;width:100%;height:100%}', '', root => {
  const sx = 16.8, sy = 9.7, L = 1600, k = sy / sx;
  let minor = '', major = '';
  for (let i = -110; i <= 110; i++) {
    if (!i) continue;
    const y = i * sy * 2;
    const d = `M${-L} ${y - L * k}L${L} ${y + L * k}M${-L} ${y + L * k}L${L} ${y - L * k}`;
    if (i % 5) minor += d; else major += d;
  }
  root.innerHTML += `<svg viewBox="-760 -421 1520 842" preserveAspectRatio="xMidYMid slice" fill="none" aria-hidden="true">
<path d="${minor}" stroke="#e9e9e9"/><path d="${major}" stroke="#bfbfbf"/>
<ellipse rx="9.500" ry="5.500" fill="#bdbdbd"/><ellipse cx="-5" rx="2.500" ry="3" fill="#fff"/><ellipse cx="5" rx="2.500" ry="3" fill="#fff"/>
<path d="M${-L} ${-L * k}L${L} ${L * k}" stroke="#ff7878"/><path d="M${-L} ${L * k}L${L} ${-L * k}" stroke="#78ff78"/></svg>`;
});

define('view-cube', ':host{width:90px;height:110px}svg{display:block;overflow:visible}text{font-family:Roboto,sans-serif;font-weight:500}',
`<svg width="90" height="110" viewBox="0 0 270 330">
<defs><radialGradient id="s"><stop offset="0" stop-color="#777" stop-opacity=".8"/><stop offset="1" stop-color="#888" stop-opacity="0"/></radialGradient></defs>
<ellipse cx="152" cy="208" rx="125" ry="62" fill="url(#s)"/>
<path d="M52 61L154 14l105 47-105 61z" fill="#efefef"/><path d="M52 61l102 61v122l-94-66z" fill="#eaeaea"/><path d="M259 61l-105 61v122l93-65z" fill="#e6e6e6"/>
<path d="M154 14l105 47-12 118-93 65-94-66L52 61zM52 61l102 61 105-61M154 122v122" fill="none" stroke="#7d7d7d" stroke-width="3"/>
<path d="M46 42l14 138" stroke="#5656d2" stroke-width="6"/><path d="M60 180l108 76" stroke="#e98560" stroke-width="6"/>
<g fill="#8b8b8b"><text transform="translate(68 142) skewY(30)" font-size="24">FRONT</text><text transform="translate(174 184) skewY(-30)" font-size="24">RIGHT</text><text transform="translate(128 62) rotate(24) skewX(-28)" font-size="23">TOP</text></g>
<text x="31" y="32" font-size="36" fill="#9180e4">Z</text><text x="176" y="287" font-size="36" fill="#ff8484">X</text></svg>`);

define('tree-row', `
:host{display:flex;align-items:center;height:20px;margin-bottom:4px;font-size:11px}
.c{width:18px;display:flex;justify-content:center}
.b{display:flex;align-items:center;height:20px;background:#f5f5f5;margin-left:5px}`,
'<span class="c"><slot name="chev"></slot></span><span class="b"><slot></slot></span>');

define('browser-panel', `
:host{width:300px}
.h{display:flex;align-items:center;height:25px;background:#f5f5f5;border:1px solid #dedede;padding:0 12px 0 6px;font:12px/16px Roboto,sans-serif}
.h span{margin-left:13px;flex:1}
.t{margin-top:4px}
tree-row span{white-space:pre}
.r1{padding-left:13px}.r2{padding-left:31px}
.ey{padding:0 6px 0 3px}.sel{display:flex;align-items:center;height:20px;background:#d6d6d6;padding:0 14px 0 4px;gap:15px;font-weight:bold}
.ra{padding:0 12px 0 6px}.ic{padding-left:3px;width:33px;color:#6d6d6d}.off{width:28px}.fo{width:30px}
.p24{padding-right:24px}.p17{padding-right:17px}`,
`<div class="h">${ic('dbl')}<span>BROWSER</span>${btn('minusSm', 'Collapse')}</div>
<div class="t">
<tree-row class="r1"><fx-icon slot="chev" name="treeDown"></fx-icon><span class="ey">${ic('eye')}</span><span class="sel">${ic('cube')}<span>(Unsaved)</span></span><span class="ra">${ic('radio')}</span></tree-row>
<tree-row class="r2"><fx-icon slot="chev" name="treeRight"></fx-icon><span class="ic">${ic('gear')}</span><span class="p24">Document Settings</span></tree-row>
<tree-row class="r2"><fx-icon slot="chev" name="treeRight"></fx-icon><span class="ic">${ic('folder')}</span><span class="p17">Named Views</span></tree-row>
<tree-row class="r2"><fx-icon slot="chev" name="treeRight"></fx-icon><span class="ic off">${ic('eyeOff')}</span><span class="fo">${ic('folder')}</span><span class="p17">Origin</span></tree-row>
</div>`);

define('comments-bar', `:host{display:flex;align-items:center;width:300px;height:25px;background:#f5f5f5;border:1px solid #dedede;border-top:0;padding:2px 12px 0 27px;font:12px/16px Roboto,sans-serif}span{flex:1}`,
`<span>COMMENTS</span>${btn('plusSm', 'Add comment')}`);

define('nav-bar', `:host{display:flex;align-items:center;height:24px;background:#f5f5f5;padding:0 3px;gap:5px;color:#6d6d6d}span{display:flex;align-items:center;gap:5px}.c{gap:3px}.w{margin-right:4px}`,
`<span>${btn('orbit', 'Orbit')}${ic('caret')}</span>${btn('look', 'Look at', 'w')}${btn('pan', 'Pan', 'w')}${btn('zoomPM', 'Zoom', 'w')}<span>${btn('fit', 'Fit')}${ic('caret')}</span><span class="c">${btn('display', 'Display')}${ic('caret')}</span><span>${btn('grid', 'Grid')}${ic('caret')}</span><span class="c">${btn('views', 'Viewports')}${ic('caret')}</span>`);

define('model-view', `
:host{position:relative;flex:1;overflow:hidden;min-height:0}
browser-panel{position:absolute;left:4px;top:5px}
comments-bar{position:absolute;left:4px;bottom:4px}
nav-bar{position:absolute;left:50%;bottom:6px;margin-left:-119px}
view-cube{position:absolute;right:25px;top:23px}
.as{position:absolute;right:13px;bottom:8px}`,
`<ground-grid></ground-grid><browser-panel></browser-panel><view-cube></view-cube><comments-bar></comments-bar><nav-bar></nav-bar>${btn('assist', 'Assistant', 'as')}`);

define('time-line', `:host{display:flex;align-items:center;height:50px;background:#f5f5f5;padding:0 13px 0 11px;gap:12px;color:#808080}.g{margin-left:auto}.m{margin:2px 0 0 1px}`,
`${btn('tStart', 'To start')}${btn('tPrev', 'Previous')}${btn('tPlay', 'Play')}${btn('tNext', 'Next')}${btn('tEnd', 'To end')}<span class="m">${ic('marker')}</span>${btn('gear', 'Settings', 'g')}`);

define('task-app', `
:host{display:flex;width:38px;height:39px;margin:0 3px;position:relative;border-radius:5px;align-items:center;justify-content:center}
:host([active]){background:#ecf7fd;border:1px solid #f4fbff}
:host([running])::after{content:"";position:absolute;bottom:1px;left:50%;width:6px;height:3px;margin-left:-3px;border-radius:2px;background:#868686}
:host([active])::after{width:16px;margin-left:-8px;bottom:0;background:#128fdd}
button{width:38px;height:36px}`, '<button><slot></slot></button>');

define('task-bar', `
:host{display:flex;align-items:center;height:48px;border-top:1px solid #a8b4c0;background:linear-gradient(90deg,#cdedfa 0,#cdecfa 45%,#d6e0f5 80%,#d5e1f6);padding:0 19px 0 20px;font:12px/16px "Open Sans","Segoe UI",sans-serif;color:#1b1b1b}
.s{width:101px;height:30px;border-radius:15px;background:#f1f9fe;margin:0 4px 0 15px;gap:5px;padding-left:1px}
.tray{margin-left:auto;display:flex;align-items:center}
.ti{margin-right:18px}.net{gap:7px}
.clk{text-align:right;display:block;margin-left:15px}`,
`${btn('win', 'Start')}<button class="s">${ic('searchDark')}Zoeken</button>
<task-app running>${ic('outlook')}</task-app><task-app>${ic('explorer')}</task-app><task-app running>${ic('chrome')}</task-app><task-app running>${ic('gapp')}</task-app><task-app running>${ic('edge')}</task-app><task-app running>${ic('word')}</task-app><task-app running>${ic('wave')}</task-app><task-app running active>${ic('fusionBig')}</task-app>
<div class="tray">${btn('trayUp', 'Meer', 'ti')}${btn('cloud', 'OneDrive', 'ti')}${btn('mic', 'Microfoon', 'ti')}<button class="net" aria-label="Netwerk">${ic('wifi')}${ic('sound')}${ic('battery')}</button><button class="clk"><div>20:17</div><div>20/01/2026</div></button></div>`);

define('fusion-desktop', `
:host{display:flex;flex-direction:column;height:100vh}
main{flex:1;display:flex;min-height:0}
data-panel{width:400px;flex:none}
.w{flex:1;display:flex;flex-direction:column;min-width:0}`,
`<title-bar></title-bar><main><data-panel></data-panel><div class="w"><quick-bar></quick-bar><ribbon-bar></ribbon-bar><model-view></model-view><time-line></time-line></div></main><task-bar></task-bar>`);
</script>
</body>
</html>
